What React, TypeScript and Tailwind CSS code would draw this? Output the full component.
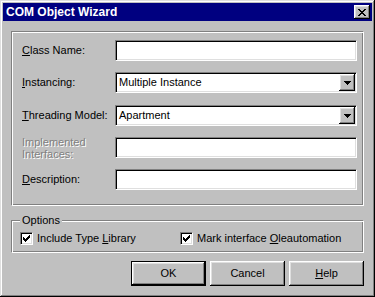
import React from 'react';

const sunken =
  'border border-t-[#808080] border-l-[#808080] border-b-white border-r-white shadow-[inset_1px_1px_0_#000,inset_-1px_-1px_0_#dfdfdf] bg-white';
const raised =
  'bg-[#c0c0c0] shadow-[inset_-1px_-1px_0_#000,inset_1px_1px_0_#fff,inset_-2px_-2px_0_#808080,inset_2px_2px_0_#dfdfdf]';
const etched =
  'border border-t-[#808080] border-l-[#808080] border-b-white border-r-white shadow-[inset_1px_1px_0_#fff,inset_-1px_-1px_0_#808080]';

function CloseGlyph() {
  const rows = [
    [[0, 2], [6, 2]],
    [[1, 2], [5, 2]],
    [[2, 4]],
    [[3, 2]],
    [[2, 4]],
    [[1, 2], [5, 2]],
    [[0, 2], [6, 2]],
  ];
  return (
    <svg width="8" height="7" viewBox="0 0 8 7" shapeRendering="crispEdges">
      {rows.map((r, y) =>
        r.map(([x, w], i) => <rect key={`${y}-${i}`} x={x} y={y} width={w} height={1} fill="#000" />)
      )}
    </svg>
  );
}

function CheckGlyph() {
  const rows = [
    [[6, 1]],
    [[5, 2]],
    [[0, 1], [4, 3]],
    [[0, 2], [3, 3]],
    [[0, 5]],
    [[1, 3]],
    [[2, 1]],
  ];
  return (
    <svg width="7" height="7" viewBox="0 0 7 7" shapeRendering="crispEdges">
      {rows.map((r, y) =>
        r.map(([x, w], i) => <rect key={`${y}-${i}`} x={x} y={y} width={w} height={1} fill="#000" />)
      )}
    </svg>
  );
}

function DownArrow() {
  return (
    <svg width="7" height="4" viewBox="0 0 7 4" shapeRendering="crispEdges">
      <path d="M0 0H7V1H6V2H5V3H4V4H3V3H2V2H1V1H0Z" fill="#000" />
    </svg>
  );
}

function TextField() {
  return <div className={`${sunken} flex-1 h-[21px]`} />;
}

function Combo({ value }: { value: string }) {
  return (
    <div className={`${sunken} flex-1 h-[21px] p-[1px] flex items-stretch`}>
      <span className="flex-1 pl-[2px] flex items-center text-black">{value}</span>
      <div className={`${raised} w-[16px] flex items-center justify-center`}>
        <DownArrow />
      </div>
    </div>
  );
}

function Check({ children }: { children: React.ReactNode }) {
  return (
    <label className="flex items-center gap-[4px] leading-[13px]">
      <span className={`${sunken} w-[13px] h-[13px] flex items-center justify-center`}>
        <CheckGlyph />
      </span>
      <span>{children}</span>
    </label>
  );
}

function Button({ children, primary }: { children: React.ReactNode; primary?: boolean }) {
  return (
    <button
      className={`${raised} w-[75px] h-[25px] flex items-center justify-center text-black ${
        primary ? 'border border-black' : ''
      }`}
    >
      {children}
    </button>
  );
}

export default function App() {
  return (
    <div className="w-[375px] h-[297px] bg-[#c0c0c0] p-[3px] flex flex-col font-['Liberation_Sans',Arial,sans-serif] text-[11px] text-black shadow-[inset_-1px_-1px_0_#000,inset_1px_1px_0_#dfdfdf,inset_-2px_-2px_0_#808080,inset_2px_2px_0_#fff]">
      {/* Title bar */}
      <div className="h-[18px] bg-[#000080] flex items-center justify-between pl-[3px] pr-[2px]">
        <span className="text-white font-bold text-[12px] leading-none">COM Object Wizard</span>
        <div className={`${raised} w-[16px] h-[14px] flex items-center justify-center`}>
          <CloseGlyph />
        </div>
      </div>

      <div className="flex-1 flex flex-col px-[8px] pt-[10px]">
        {/* Main fields */}
        <div className={`${etched} pl-[10px] pr-[6px] pt-[8px] pb-[15px] flex flex-col`}>
          <div className="flex items-center h-[21px]">
            <span className="w-[93px]">
              <span className="underline">C</span>lass Name:
            </span>
            <TextField />
          </div>
          <div className="flex items-center h-[21px] mt-[11px]">
            <span className="w-[93px]">
              <span className="underline">I</span>nstancing:
            </span>
            <Combo value="Multiple Instance" />
          </div>
          <div className="flex items-center h-[21px] mt-[12px]">
            <span className="w-[93px]">
              <span className="underline">T</span>hreading Model:
            </span>
            <Combo value="Apartment" />
          </div>
          <div className="flex items-center h-[21px] mt-[11px]">
            <span className="w-[93px] leading-[12px] text-[#808080] [text-shadow:1px_1px_0_#fff]">
              Implemented
              <br />
              Interfaces:
            </span>
            <TextField />
          </div>
          <div className="flex items-center h-[21px] mt-[11px]">
            <span className="w-[93px]">
              <span className="underline">D</span>escription:
            </span>
            <TextField />
          </div>
        </div>

        {/* Options */}
        <div className={`${etched} relative mt-[14px] h-[33px] pl-[8px] pt-[11px] flex items-start`}>
          <span className="absolute left-[8px] top-[-8px] px-[2px] bg-[#c0c0c0] leading-[14px]">Options</span>
          <div className="w-[160px]">
            <Check>
              Include Type <span className="underline">L</span>ibrary
            </Check>
          </div>
          <Check>
            Mark interface <span className="underline">O</span>leautomation
          </Check>
        </div>

        {/* Buttons */}
        <div className="flex justify-end gap-[4px] mt-[8px]">
          <Button primary>OK</Button>
          <Button>Cancel</Button>
          <Button>
            <span className="underline">H</span>elp
          </Button>
        </div>
      </div>
    </div>
  );
}
